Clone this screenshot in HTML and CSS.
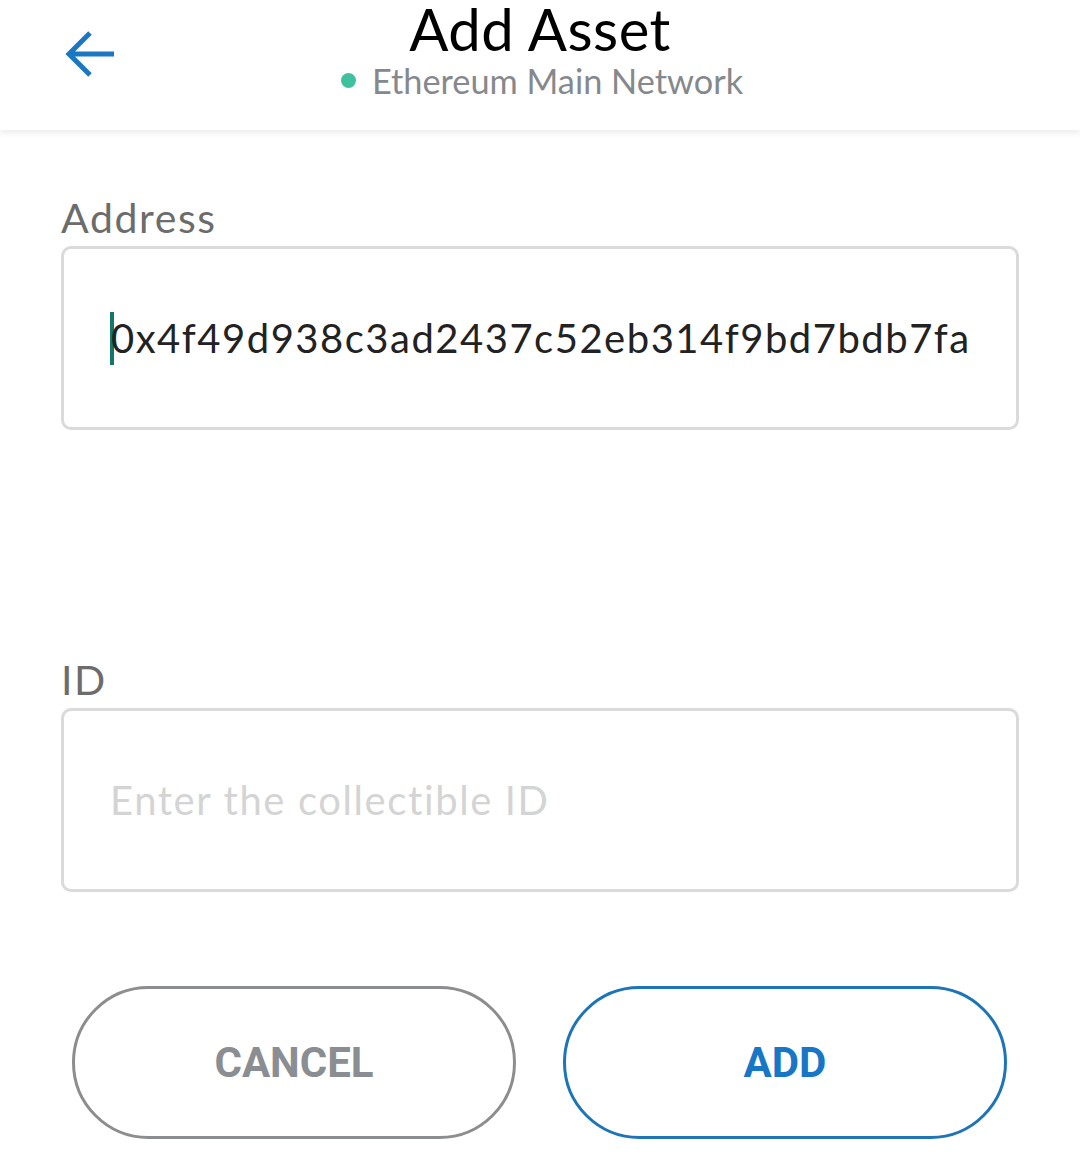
FILE: index.html
```html
<!DOCTYPE html>
<html lang="en">
<head>
    <meta charset="UTF-8">
    <meta name="viewport" content="width=device-width, initial-scale=1.0">
    <title>Add Asset</title>
    <link rel="stylesheet" href="styles.css">
</head>
<body>
    <header class="topbar">
        <button class="back" aria-label="Back">
            <svg width="52" height="52" viewBox="0 0 52 52">
                <path d="M50 26 H6 M26 5 L5 26 L26 47" fill="none" stroke="#1c77c3" stroke-width="5"/>
            </svg>
        </button>
        <div class="title">
            <h1>Add Asset</h1>
            <div class="network"><span class="dot"></span>Ethereum Main Network</div>
        </div>
    </header>

    <main class="form">
        <div class="field">
            <label for="address">Address</label>
            <div class="box">
                <span class="caret"></span><span class="value">0x4f49d938c3ad2437c52eb314f9bd7bdb7fa</span>
            </div>
        </div>

        <div class="field field-id">
            <label for="token_id">ID</label>
            <div class="box">
                <span class="placeholder">Enter the collectible ID</span>
            </div>
        </div>

        <div class="actions">
            <button class="btn cancel">CANCEL</button>
            <button class="btn add">ADD</button>
        </div>
    </main>
</body>
</html>
```

FILE: styles.css
```css
body {
    font-family: 'Lato', 'Noto Sans', sans-serif;
    margin: 0;
    padding: 0;
    background-color: #ffffff;
    color: #000000;
}

.topbar {
    height: 130px;
    position: relative;
    display: flex;
    justify-content: center;
    background-color: #ffffff;
    box-shadow: 0 3px 6px rgba(0, 0, 0, 0.08);
}

.back {
    position: absolute;
    left: 64px;
    top: 28px;
    padding: 0;
    border: none;
    background: none;
}

.title {
    text-align: center;
    padding-top: 2px;
}

.title h1 {
    margin: 0;
    font-size: 58px;
    font-weight: 400;
    line-height: 54px;
    letter-spacing: 0.5px;
}

.network {
    display: flex;
    align-items: center;
    justify-content: center;
    gap: 16px;
    margin-top: 4px;
    margin-left: 4px;
    font-size: 34.3px;
    color: #85898d;
}

.dot {
    width: 15px;
    height: 15px;
    border-radius: 50%;
    background-color: #3fc1a0;
}

.form {
    padding: 60px 61px 0 61px;
}

.field label {
    display: block;
    font-size: 41px;
    letter-spacing: 1.6px;
    color: #6c6c6c;
    line-height: 56px;
    margin-bottom: 0;
}

.box {
    height: 178px;
    border: 3px solid #dadada;
    border-radius: 10px;
    display: flex;
    align-items: center;
    padding-left: 46px;
    font-size: 40px;
    letter-spacing: 1.5px;
}

.caret {
    width: 4px;
    height: 53px;
    background-color: #13766a;
    margin-right: -3px;
}

.value {
    color: #222222;
}

.placeholder {
    color: #d4d4d4;
    letter-spacing: 1.6px;
}

.field-id {
    margin-top: 222px;
}

.actions {
    display: flex;
    justify-content: space-between;
    padding: 0 12px 0 11px;
    margin-top: 94px;
}

.btn {
    width: 444px;
    height: 153px;
    border-radius: 77px;
    background: #ffffff;
    border: 3px solid #8c8d8f;
    font-family: 'Roboto', sans-serif;
    font-weight: 700;
    font-size: 42px;
    color: #8a8d91;
}

.btn.add {
    border-color: #1d75b8;
    color: #1776c6;
}
```
